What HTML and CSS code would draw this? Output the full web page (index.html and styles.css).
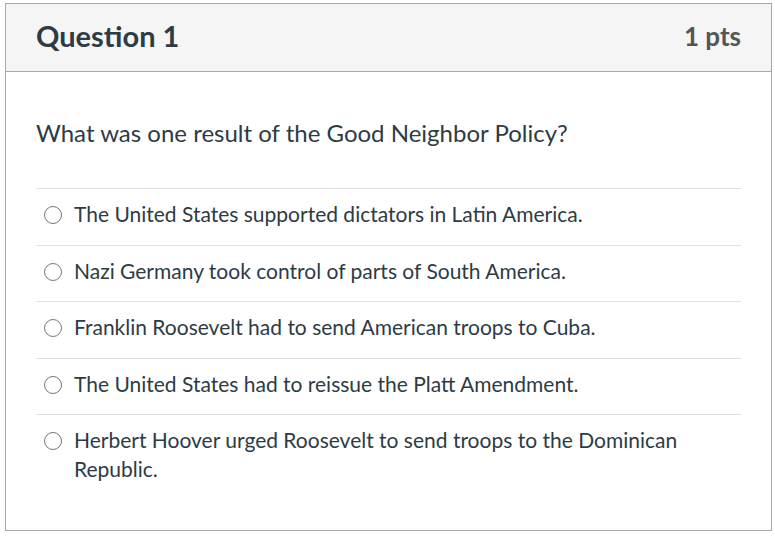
FILE: index.html
```html
<!DOCTYPE html>
<html>
<head>
<meta charset="utf-8">
<link rel="stylesheet" href="styles.css">
</head>
<body>
<div class="question">
  <div class="header">
    <h2 class="title">Question 1</h2>
    <div class="points">1 pts</div>
  </div>
  <div class="content">
    <p class="qtext">What was one result of the Good Neighbor Policy?</p>
    <div class="answers">
      <label class="answer"><span class="radio"></span><span class="atext">The United States supported dictators in Latin America.</span></label>
      <label class="answer"><span class="radio"></span><span class="atext">Nazi Germany took control of parts of South America.</span></label>
      <label class="answer"><span class="radio"></span><span class="atext">Franklin Roosevelt had to send American troops to Cuba.</span></label>
      <label class="answer"><span class="radio"></span><span class="atext">The United States had to reissue the Platt Amendment.</span></label>
      <label class="answer"><span class="radio"></span><span class="atext">Herbert Hoover urged Roosevelt to send troops to the Dominican Republic.</span></label>
    </div>
  </div>
</div>
</body>
</html>
```
FILE: styles.css
```css
html, body { margin: 0; padding: 0; background: #fff; }
body { padding: 3px 3px 0 5px; font-family: Lato, "Open Sans", sans-serif; color: #2d3b45; }
.question { border: 1px solid #a8a8a8; box-sizing: border-box; width: 767px; }
.header { display: flex; justify-content: space-between; align-items: center; background: #f5f5f5; border-bottom: 1px solid #a8a8a8; padding: 0 30px; box-sizing: border-box; height: 68px; }
.title { margin: -3px 0 0; font-size: 29px; line-height: 36px; font-weight: 700; color: #2d3b45; }
.points { margin-top: -3px; font-size: 26px; line-height: 36px; font-weight: 700; color: #555; }
.content { padding: 46px 30px 31px; }
.qtext { margin: 0 0 40px; font-size: 24px; line-height: 30px; }
.answer { display: flex; align-items: flex-start; border-top: 1px solid #e0e0e0; padding: 10px 0 16px; font-size: 21px; line-height: 29.5px; }
.answer:last-child { line-height: 29px; }
.radio { flex: none; width: 18px; height: 18px; border: 1px solid #777; border-radius: 50%; margin: 7px 12px 0 8px; box-sizing: border-box; }
.atext { flex: 1; padding-right: 50px; }
```
